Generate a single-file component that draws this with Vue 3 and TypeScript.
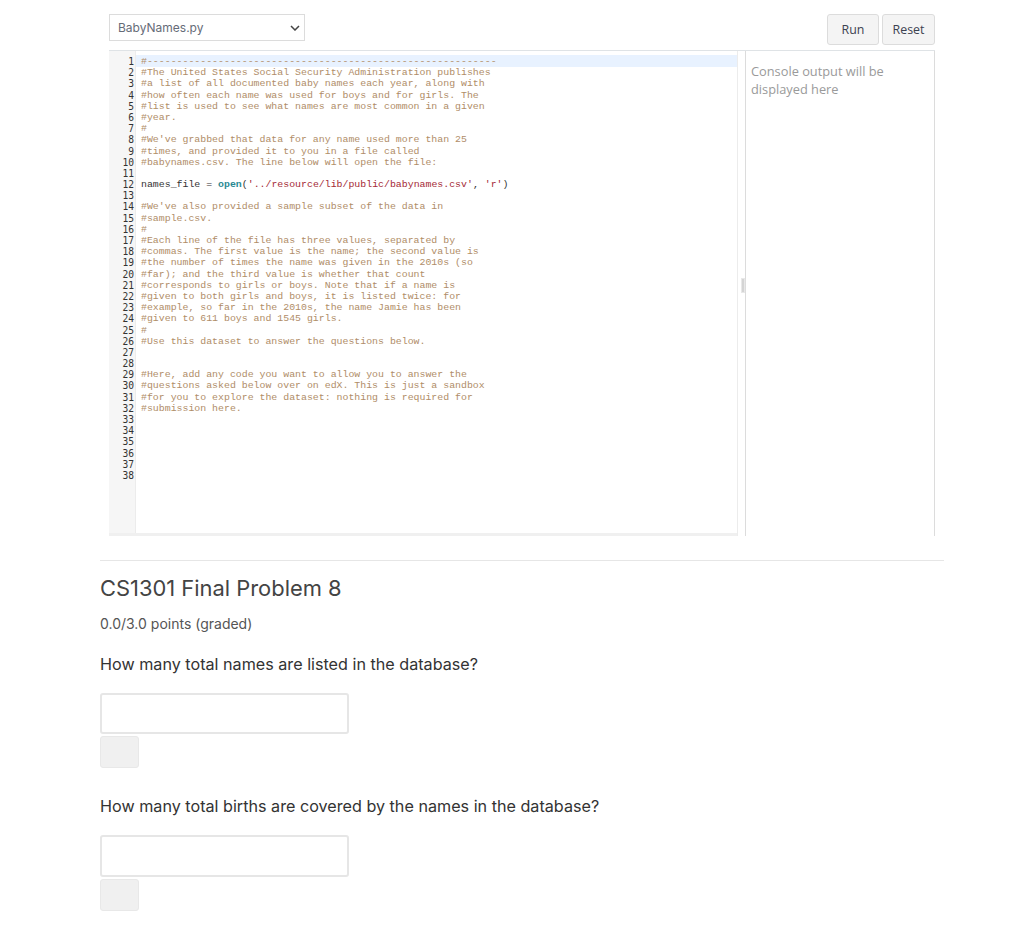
<script setup lang="ts">
type Seg = { t: string; c: string }
const comments: Record<number, string> = {
  1: '#-----------------------------------------------------------',
  2: '#The United States Social Security Administration publishes',
  3: '#a list of all documented baby names each year, along with',
  4: '#how often each name was used for boys and for girls. The',
  5: '#list is used to see what names are most common in a given',
  6: '#year.',
  7: '#',
  8: "#We've grabbed that data for any name used more than 25",
  9: '#times, and provided it to you in a file called',
  10: '#babynames.csv. The line below will open the file:',
  14: "#We've also provided a sample subset of the data in",
  15: '#sample.csv.',
  16: '#',
  17: '#Each line of the file has three values, separated by',
  18: '#commas. The first value is the name; the second value is',
  19: '#the number of times the name was given in the 2010s (so',
  20: '#far); and the third value is whether that count',
  21: '#corresponds to girls or boys. Note that if a name is',
  22: '#given to both girls and boys, it is listed twice: for',
  23: '#example, so far in the 2010s, the name Jamie has been',
  24: '#given to 611 boys and 1545 girls.',
  25: '#',
  26: '#Use this dataset to answer the questions below.',
  29: '#Here, add any code you want to allow you to answer the',
  30: '#questions asked below over on edX. This is just a sandbox',
  31: '#for you to explore the dataset: nothing is required for',
  32: '#submission here.',
}
const lines: Seg[][] = Array.from({ length: 38 }, (_, i) => {
  const n = i + 1
  if (n === 12) {
    return [
      { t: 'names_file = ', c: 'plain' },
      { t: 'open', c: 'builtin' },
      { t: '(', c: 'plain' },
      { t: "'../resource/lib/public/babynames.csv'", c: 'str' },
      { t: ', ', c: 'plain' },
      { t: "'r'", c: 'str' },
      { t: ')', c: 'plain' },
    ]
  }
  return comments[n] ? [{ t: comments[n], c: 'comment' }] : []
})
const questions: string[] = [
  'How many total names are listed in the database?',
  'How many total births are covered by the names in the database?',
]
</script>

<template>
  <div class="page">
    <section class="workspace">
      <div class="toolbar">
        <div class="select">
          <span>BabyNames.py</span>
          <svg width="10" height="6" viewBox="0 0 10 6" fill="none" aria-hidden="true">
            <path d="M1 1l4 4 4-4" stroke="#444" stroke-width="1.5" />
          </svg>
        </div>
        <div class="actions">
          <button class="btn run" type="button">Run</button>
          <button class="btn reset" type="button">Reset</button>
        </div>
      </div>
      <div class="panes">
        <div class="editor">
          <div class="editor-body">
            <div class="gutter">
              <div v-for="(_, i) in lines" :key="i" class="num">{{ i + 1 }}</div>
            </div>
            <div class="code">
              <div v-for="(line, i) in lines" :key="i" class="line" :class="{ active: i === 0 }">
                <span v-for="(seg, j) in line" :key="j" :class="seg.c">{{ seg.t }}</span>
              </div>
            </div>
          </div>
          <div class="hscroll"></div>
        </div>
        <div class="splitter"><span class="handle"></span></div>
        <div class="console">Console output will be displayed here</div>
      </div>
    </section>
    <hr class="divider" />
    <section class="problem">
      <h2 class="title">CS1301 Final Problem 8</h2>
      <p class="points">0.0/3.0 points (graded)</p>
      <div v-for="q in questions" :key="q" class="question">
        <p class="qtext">{{ q }}</p>
        <input class="answer" type="text" aria-label="Answer" />
        <button class="submit" type="button" aria-label="Submit"></button>
      </div>
    </section>
  </div>
</template>

<style>
html, body { background: #fff; }
</style>

<style scoped>
.page {
  width: 844px;
  margin-left: 100px;
  padding-top: 14px;
  font-family: Inter, "Liberation Sans", sans-serif;
  color: #414141;
}
.workspace { margin: 0 9px 0 9px; }
.toolbar { display: flex; justify-content: space-between; align-items: flex-start; height: 36px; }
.select {
  box-sizing: border-box;
  width: 196px;
  height: 27px;
  border: 1px solid #dcdcdc;
  display: flex;
  align-items: center;
  justify-content: space-between;
  padding: 0 4px 0 8px;
  font-size: 12px;
  color: #666c78;
}
.actions { display: flex; gap: 3px; }
.btn {
  box-sizing: border-box;
  height: 31px;
  background: #f4f4f4;
  border: 1px solid #dcdcdc;
  border-radius: 3px;
  font: 12.4px "Open Sans", sans-serif;
  color: #3c4250;
  padding: 0;
}
.run { width: 52px; }
.reset { width: 53px; }
.panes { display: flex; height: 485px; border-top: 1px solid #dfe3e6; }
.editor {
  width: 629px;
  box-sizing: border-box;
  border-right: 1px solid #ececec;
  display: flex;
  flex-direction: column;
}
.editor-body { flex: 1; display: flex; min-height: 0; overflow: hidden; }
.gutter {
  width: 27px;
  flex: none;
  background: #f6f6f6;
  border-right: 1px solid #ececec;
  box-sizing: border-box;
  padding: 5px 1px 0 0;
  text-align: right;
  font: 9.6px/11.2px "DejaVu Sans Mono", monospace;
  color: #333;
}
.num { height: 11.2px; }
.code {
  flex: 1;
  padding-top: 5px;
  font: 9.9px/11.2px "Liberation Mono", monospace;
  white-space: pre;
}
.line { height: 11.2px; padding-left: 5px; }
.line.active { background: #e8f2ff; box-shadow: 0 -1px 0 #e8f2ff; }
.comment { color: #b08d68; }
.plain { color: #333; }
.builtin { color: #2a8a94; font-weight: 700; }
.str { color: #a52a36; }
.hscroll { height: 3px; background: #f0f0f0; flex: none; }
.splitter { width: 7px; flex: none; position: relative; }
.handle {
  position: absolute;
  left: 3px;
  top: 227px;
  width: 2px;
  height: 13px;
  background: #d4d4d4;
  border: 1px solid #e8e8e8;
}
.console {
  flex: 1;
  border-left: 1px solid #dcdcdc;
  border-right: 1px solid #dcdcdc;
  padding: 11px 40px 0 5px;
  font: 12.8px/18px "Open Sans", sans-serif;
  color: #9a9a9a;
}
.divider { border: 0; border-top: 1px solid #e6e6e6; margin: 24px 0 0; }
.title { margin: 14px 0 0; font-size: 21.9px; line-height: 26px; font-weight: 400; color: #444; }
.points { margin: 13px 0 0; font-size: 14px; line-height: 20px; color: #555; }
.question { margin-bottom: 28px; }
.qtext { margin: 20px 0 0; font-size: 16.17px; line-height: 20px; color: #333; }
.question + .question .qtext { margin-top: 0; }
.answer {
  display: block;
  box-sizing: border-box;
  width: 249px;
  height: 41.4px;
  margin-top: 19px;
  border: 2px solid #e6e6e6;
  border-radius: 3px;
  background: #fff;
}
.submit {
  display: block;
  box-sizing: border-box;
  width: 39px;
  height: 32px;
  margin-top: 2px;
  background: #f0f0f0;
  border: 1px solid #e8e8e8;
  border-radius: 3px;
  padding: 0;
}
</style>
